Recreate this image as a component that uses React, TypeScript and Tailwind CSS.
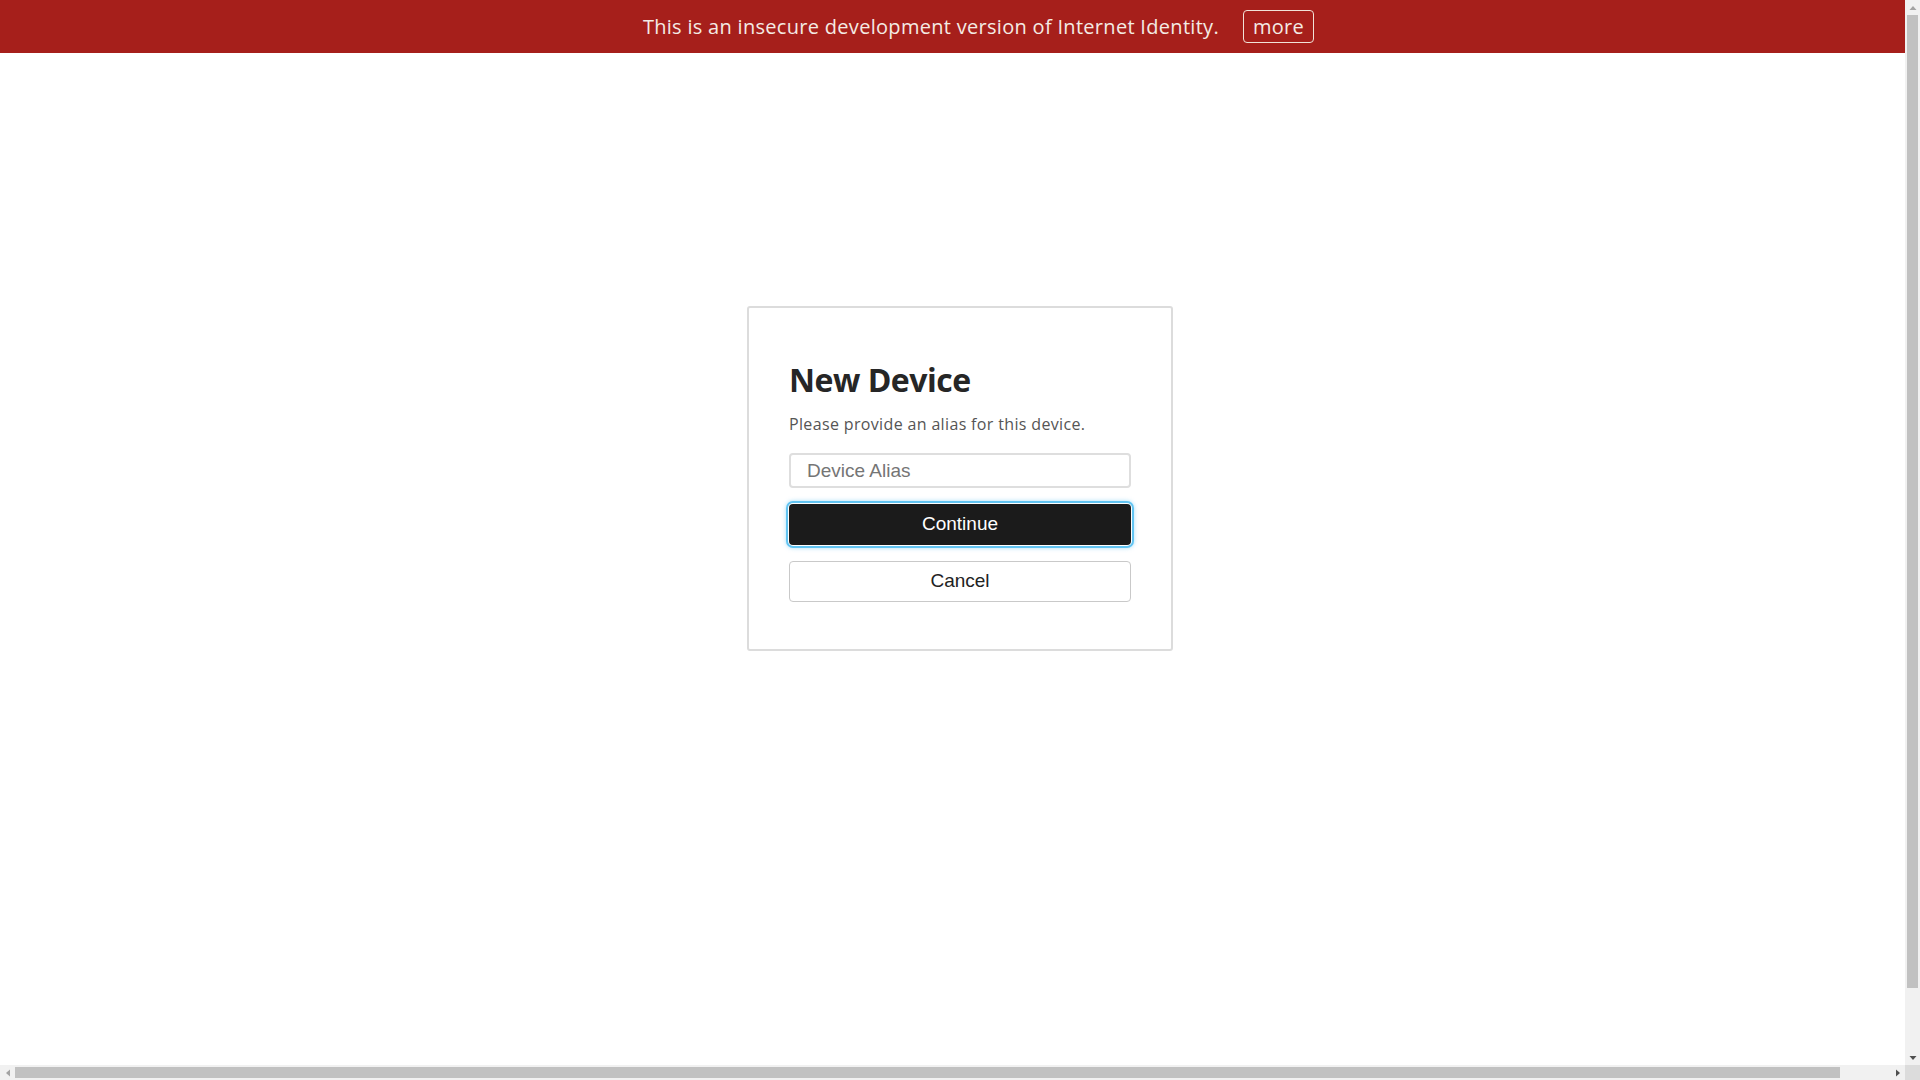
import React from 'react';

const sans = "font-['Open_Sans',_'Noto_Sans',sans-serif]";
const arial = "font-['Liberation_Sans',Arial,sans-serif]";

function Arrow({ dir, color }: { dir: 'up' | 'down' | 'left' | 'right'; color: string }) {
  const pts = {
    up: '0.5,5 4,1 7.5,5',
    down: '0.5,1 4,5 7.5,1',
    left: '5,0.5 1,4 5,7.5',
    right: '1,0.5 5,4 1,7.5',
  }[dir];
  const vertical = dir === 'up' || dir === 'down';
  return (
    <svg width={vertical ? 8 : 6} height={vertical ? 6 : 8} viewBox={vertical ? '0 0 8 6' : '0 0 6 8'}>
      <polygon points={pts} fill={color} />
    </svg>
  );
}

// Browser scrollbars, as they appear in the capture
function Scrollbars() {
  return (
    <>
      <div className="fixed top-0 right-0 w-[15px] h-[1065px] bg-[#f1f1f1] flex flex-col items-center">
        <div className="h-[15px] flex items-center justify-center"><Arrow dir="up" color="#a3a3a3" /></div>
        <div className="flex-1 w-full flex flex-col px-[2px]">
          <div className="h-[973px] bg-[#c1c1c1]" />
        </div>
        <div className="h-[15px] flex items-center justify-center"><Arrow dir="down" color="#505050" /></div>
      </div>
      <div className="fixed bottom-0 left-0 h-[15px] w-[1905px] bg-[#f1f1f1] flex items-center">
        <div className="w-[15px] flex items-center justify-center"><Arrow dir="left" color="#a3a3a3" /></div>
        <div className="flex-1 h-full flex items-center py-[2px]">
          <div className="w-[1825px] h-full bg-[#c1c1c1]" />
        </div>
        <div className="w-[15px] flex items-center justify-center"><Arrow dir="right" color="#505050" /></div>
      </div>
      <div className="fixed bottom-0 right-0 w-[15px] h-[15px] bg-[#dcdcdc]" />
    </>
  );
}

export default function App() {
  return (
    <div className="w-[1957px] min-h-[1133px] bg-white">
      {/* Dev banner */}
      <div className={`h-[53px] bg-[#a61f1b] flex items-center justify-center text-[20px] tracking-[0.3px] text-[#f4ebe4] ${sans}`}>
        <span>This is an insecure development version of Internet Identity.</span>
        <button className="ml-6 h-[33px] px-[9px] border border-[#f1e2d8] rounded-[4px] text-[20px] leading-none">
          more
        </button>
      </div>

      {/* Card */}
      <div className="w-screen flex justify-center pt-[253px]">
        <div className="w-[426px] border-2 border-[#dcdcdc] rounded-[3px] px-10 pt-[52px] pb-[47px]">
          <h1 className={`text-[32px] leading-[40px] font-bold tracking-[-0.5px] text-[#262626] ${sans}`}>New Device</h1>
          <p className={`mt-3 text-[16px] leading-6 tracking-[0.35px] text-[#555] ${sans}`}>Please provide an alias for this device.</p>
          <input
            type="text"
            placeholder="Device Alias"
            className={`mt-[17px] w-full h-[35px] border-2 border-[#dedede] rounded-[4px] px-4 text-[19px] outline-none placeholder:text-[#757575] ${arial}`}
          />
          <button
            className={`mt-4 w-full h-[41px] bg-[#1b1b1b] text-white rounded-[4px] text-[19px] shadow-[0_0_0_1px_#ffffff,0_0_0_3px_#62c4f2,0_0_4px_3px_rgba(98,196,242,0.55)] ${arial}`}
          >
            Continue
          </button>
          <button
            className={`mt-4 w-full h-[41px] bg-white text-[#222] border border-[#c9c9c9] rounded-[4px] text-[19px] ${arial}`}
          >
            Cancel
          </button>
        </div>
      </div>

      <Scrollbars />
    </div>
  );
}
